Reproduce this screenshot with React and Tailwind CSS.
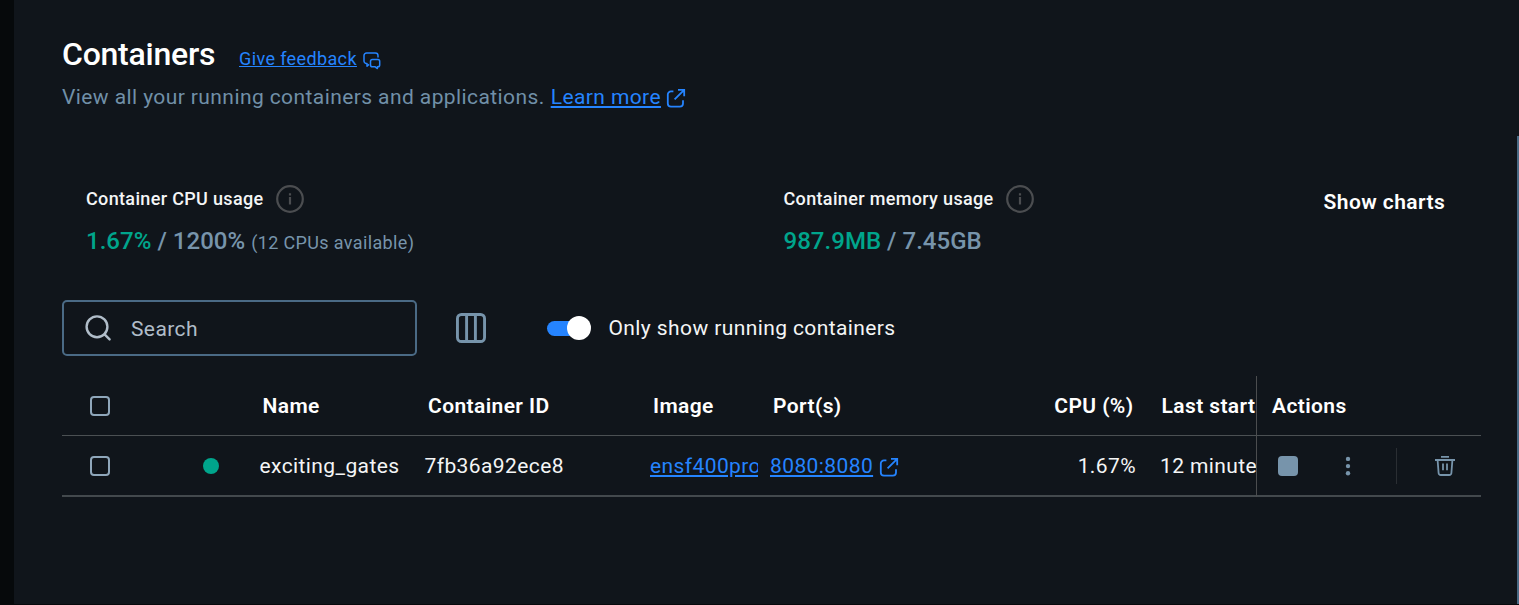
function ExternalIcon({ className }) {
  return (
    <svg className={className} width="20" height="20" viewBox="0 0 20 20" fill="none" stroke="currentColor" strokeWidth="1.8">
      <path d="M7.4 3.4H5a3.2 3.2 0 0 0-3.2 3.2v8.8A3.2 3.2 0 0 0 5 18.6h8.8a3.2 3.2 0 0 0 3.2-3.2v-3.2" />
      <path d="M8.6 11.4 18.2 1.8M12 1.8h6.2v6.4" />
    </svg>
  );
}

function FeedbackIcon() {
  return (
    <svg className="ml-1.5 mt-[3px] shrink-0" width="18" height="18" viewBox="0 0 18 18" fill="none" stroke="currentColor" strokeWidth="1.5" strokeLinejoin="round">
      <path d="M15 5.6V3.6A2.6 2.6 0 0 0 12.4 1H3.6A2.6 2.6 0 0 0 1 3.6V9a2.6 2.6 0 0 0 2.6 2.6h.4v2.6l2-1.8" />
      <path d="M9.3 7.6h5.6a1.8 1.8 0 0 1 1.8 1.8V13a1.8 1.8 0 0 1-1.8 1.8h-.5v1.8l-2.2-1.8H9.3A1.8 1.8 0 0 1 7.5 13V9.4a1.8 1.8 0 0 1 1.8-1.8Z" />
    </svg>
  );
}

function InfoIcon() {
  return (
    <svg className="ml-3 shrink-0" width="28" height="28" viewBox="0 0 28 28" fill="none" stroke="#4b4d50" strokeWidth="2.2">
      <circle cx="14" cy="14" r="12.8" />
      <path d="M14 12v7.6M14 8.2v2.2" />
    </svg>
  );
}

function TrashIcon() {
  return (
    <svg width="20" height="20" viewBox="0 0 20 20" fill="none" stroke="#7794ab" strokeWidth="1.8">
      <path d="M0 4h20M6 .9h8" />
      <path d="M2.6 4l1 13a2.2 2.2 0 0 0 2.2 2h8.4a2.2 2.2 0 0 0 2.2-2l1-13" />
      <path d="M8 7.6v6.6M12 7.6v6.6" />
    </svg>
  );
}

function Checkbox() {
  return <span className="block size-5 rounded-[4px] border-2 border-[#8fa7bb]" />;
}

function Usage({ title, value, total, note }) {
  return (
    <div>
      <div className="flex h-7 items-center">
        <span className="text-[18px] leading-6 font-medium tracking-[0.34px] text-[#f4f5f6]">{title}</span>
        <InfoIcon />
      </div>
      <div className="mt-3 text-[24px] leading-8 font-medium tracking-[0.03px] text-[#7794ab]">
        <span className="text-[#00a58c]">{value}</span> / {total}
        {note && <span className="ml-1.5 text-[18px] font-normal tracking-[0.36px]">{note}</span>}
      </div>
    </div>
  );
}

export default function App() {
  return (
    <div className="flex h-[605px] w-full overflow-hidden border-b border-[#07090c] bg-[#10151b] font-['Roboto',sans-serif] text-[21px] leading-7 tracking-[0.4px] text-white">
      <div className="w-[14px] shrink-0 bg-[#06090b]" />
      <main className="w-[1503px] shrink-0 pr-9 pl-12">
        <header className="pt-[34px]">
          <div className="flex h-10 items-center">
            <h1 className="w-[177px] text-[32px] leading-10 font-[540] tracking-[-0.25px]">Containers</h1>
            <a className="mt-2.5 flex items-center text-[18px] tracking-[0.38px] text-[#2584ff]">
              <span className="underline">Give feedback</span>
              <FeedbackIcon />
            </a>
          </div>
          <p className="mt-[9px] flex items-center text-[#7190a8]">
            <span className="tracking-[0.41px]">View all your running containers and applications.</span>
            <a className="ml-1.5 flex items-center text-[#2584ff]">
              <span className="underline">Learn more</span>
              <ExternalIcon className="mt-0.5 ml-[5px]" />
            </a>
          </p>
        </header>

        <section className="mt-[74px] flex pl-6">
          <div className="w-[697.5px]">
            <Usage title="Container CPU usage" value="1.67%" total="1200%" note="(12 CPUs available)" />
          </div>
          <div className="w-[540px]">
            <Usage title="Container memory usage" value="987.9MB" total="7.45GB" />
          </div>
          <button className="mt-[3px] h-7 font-semibold tracking-[0.43px]">Show charts</button>
        </section>

        <section className="mt-[41px] flex items-center">
          <div className="flex h-14 w-[355px] items-center rounded-[5px] border-2 border-[#4a6a85] pl-5 text-[#b0bdc9]">
            <svg className="shrink-0" width="30" height="30" viewBox="0 0 30 30" fill="none" stroke="currentColor" strokeWidth="2.4" strokeLinecap="round">
              <circle cx="13" cy="13.8" r="10.4" />
              <path d="m20.6 21.4 5 5" />
            </svg>
            <span className="mt-0.5 ml-[17px]">Search</span>
          </div>
          <svg className="ml-[39px] shrink-0" width="30" height="30" viewBox="0 0 30 30" fill="none" stroke="#7794ab" strokeWidth="2.9">
            <rect x="1.45" y="1.45" width="27.1" height="27.1" rx="4" />
            <path d="M10.6 1v28M19.4 1v28" />
          </svg>
          <div className="ml-[61px] flex h-[15px] w-11 items-center justify-end rounded-full bg-linear-to-r from-[#2584ff] from-80% to-transparent to-80%">
            <span className="size-6 shrink-0 rounded-full bg-white" />
          </div>
          <span className="ml-[17.5px] font-[440] tracking-[0.4px] text-[#f4f5f6]">Only show running containers</span>
        </section>

        <section className="mt-5 flex w-[1419px] whitespace-nowrap">
          <div className="w-[1194px] overflow-hidden">
            <div className="flex h-[60px] items-center border-b border-[#4b5053] pl-7 font-semibold *:shrink-0">
              <div className="w-[172.5px]"><Checkbox /></div>
              <span className="w-[165.5px]">Name</span>
              <span className="w-[225px]">Container ID</span>
              <span className="w-[120px]">Image</span>
              <span className="w-[268px]">Port(s)</span>
              <span className="w-[92.5px] text-right">CPU (%)</span>
              <span className="ml-[28px]">Last started</span>
            </div>
            <div className="flex h-[61px] items-center border-b-2 border-[#43494d] pl-7 font-[440] text-[#f4f5f6] *:shrink-0">
              <div className="w-[113px]"><Checkbox /></div>
              <div className="w-14"><span className="block size-4 rounded-full bg-[#00a58c]" /></div>
              <span className="w-[165.5px] pl-[0.5px]">exciting_gates</span>
              <span className="w-[225.5px]">7fb36a92ece8</span>
              <span className="mr-3 w-[108px] overflow-hidden font-normal text-[#2584ff] underline">ensf400project</span>
              <a className="flex w-[270px] items-center font-normal text-[#2584ff]">
                <span className="underline">8080:8080</span>
                <ExternalIcon className="mt-0.5 ml-[5.5px]" />
              </a>
              <span className="w-24 text-right">1.67%</span>
              <span className="ml-6">12 minutes ago</span>
            </div>
          </div>
          <div className="w-[225px] border-l border-[#4b4d4f]">
            <div className="flex h-[60px] items-center border-b border-[#4b5053] pl-[15px] font-semibold">Actions</div>
            <div className="flex h-[61px] items-center border-b-2 border-[#43494d] pl-[21px]">
              <span className="block size-5 rounded-[4px] bg-[#7794ab]" />
              <svg className="ml-[46px]" width="8" height="20" viewBox="0 0 8 20" fill="#7794ab">
                <circle cx="4" cy="2.9" r="2.2" />
                <circle cx="4" cy="10.1" r="2.2" />
                <circle cx="4" cy="17.2" r="2.2" />
              </svg>
              <span className="mr-[38px] ml-11 block h-9 w-px bg-[#2a2e33]" />
              <TrashIcon />
            </div>
          </div>
        </section>
      </main>
      <div className="flex w-[2px] shrink-0 flex-col">
        <div className="h-[136px]" />
        <div className="flex-1 bg-[#4a6a85]" />
      </div>
    </div>
  );
}
